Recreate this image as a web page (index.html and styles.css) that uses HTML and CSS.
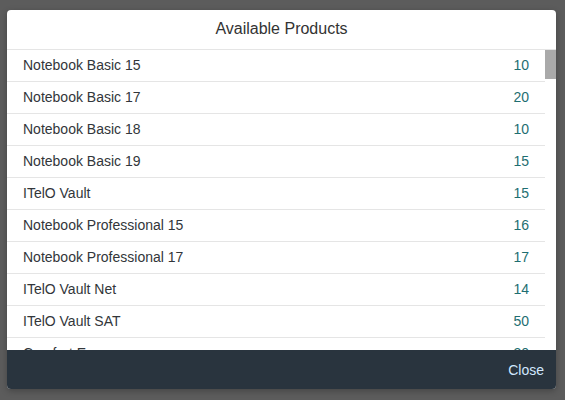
FILE: index.html
```html
<!DOCTYPE html>
<html lang="en">
<head>
<meta charset="utf-8">
<title>Available Products</title>
<link rel="stylesheet" href="styles.css">
</head>
<body>
<div class="dialog">
  <header class="dialog-header">Available Products</header>
  <div class="content">
    <ul class="list">
      <li class="item"><span class="name">Notebook Basic 15</span><span class="qty">10</span></li>
      <li class="item"><span class="name">Notebook Basic 17</span><span class="qty">20</span></li>
      <li class="item"><span class="name">Notebook Basic 18</span><span class="qty">10</span></li>
      <li class="item"><span class="name">Notebook Basic 19</span><span class="qty">15</span></li>
      <li class="item"><span class="name">ITelO Vault</span><span class="qty">15</span></li>
      <li class="item"><span class="name">Notebook Professional 15</span><span class="qty">16</span></li>
      <li class="item"><span class="name">Notebook Professional 17</span><span class="qty">17</span></li>
      <li class="item"><span class="name">ITelO Vault Net</span><span class="qty">14</span></li>
      <li class="item"><span class="name">ITelO Vault SAT</span><span class="qty">50</span></li>
      <li class="item"><span class="name">Comfort Easy</span><span class="qty">30</span></li>
    </ul>
    <div class="scrollbar"><div class="thumb"></div></div>
  </div>
  <footer class="dialog-footer">
    <button class="btn-close" type="button">Close</button>
  </footer>
</div>
</body>
</html>
```
FILE: styles.css
```css
* { box-sizing: border-box; }
html, body { height: 100%; }
body {
  margin: 0;
  background: #5c5c5c;
  font-family: "Liberation Sans", Arial, sans-serif;
  color: #32363a;
  padding: 10px 9px 11px 7px;
  overflow: hidden;
}
.dialog {
  width: 549px;
  height: 379px;
  background: #fff;
  border-radius: 4px;
  overflow: hidden;
  display: flex;
  flex-direction: column;
  box-shadow: 0 2px 6px rgba(0,0,0,0.25);
}
.dialog-header {
  flex: none;
  height: 40px;
  border-bottom: 1px solid #e5e5e5;
  display: flex;
  align-items: center;
  justify-content: center;
  font-size: 16px;
  color: #333;
  padding-bottom: 1px;
}
.content {
  flex: 1;
  min-height: 0;
  display: flex;
}
.list {
  flex: 1;
  min-width: 0;
  margin: 0;
  padding: 0;
  list-style: none;
  overflow: hidden;
}
.scrollbar {
  flex: none;
  width: 11px;
  background: #fff;
}
.thumb {
  height: 29px;
  background: #a9a9a9;
}
.item {
  height: 32px;
  border-bottom: 1px solid #e5e5e5;
  display: flex;
  align-items: center;
  justify-content: space-between;
  padding: 0 16px 1px;
  font-size: 14px;
}
.name { color: #32363a; }
.qty { color: #1e6e71; }
.dialog-footer {
  flex: none;
  height: 39px;
  background: #29343e;
  display: flex;
  align-items: center;
  justify-content: flex-end;
  padding-right: 12px;
}
.btn-close {
  background: none;
  border: 0;
  padding: 0;
  font-family: inherit;
  font-size: 14px;
  color: #d1e8ff;
  cursor: pointer;
}
```
